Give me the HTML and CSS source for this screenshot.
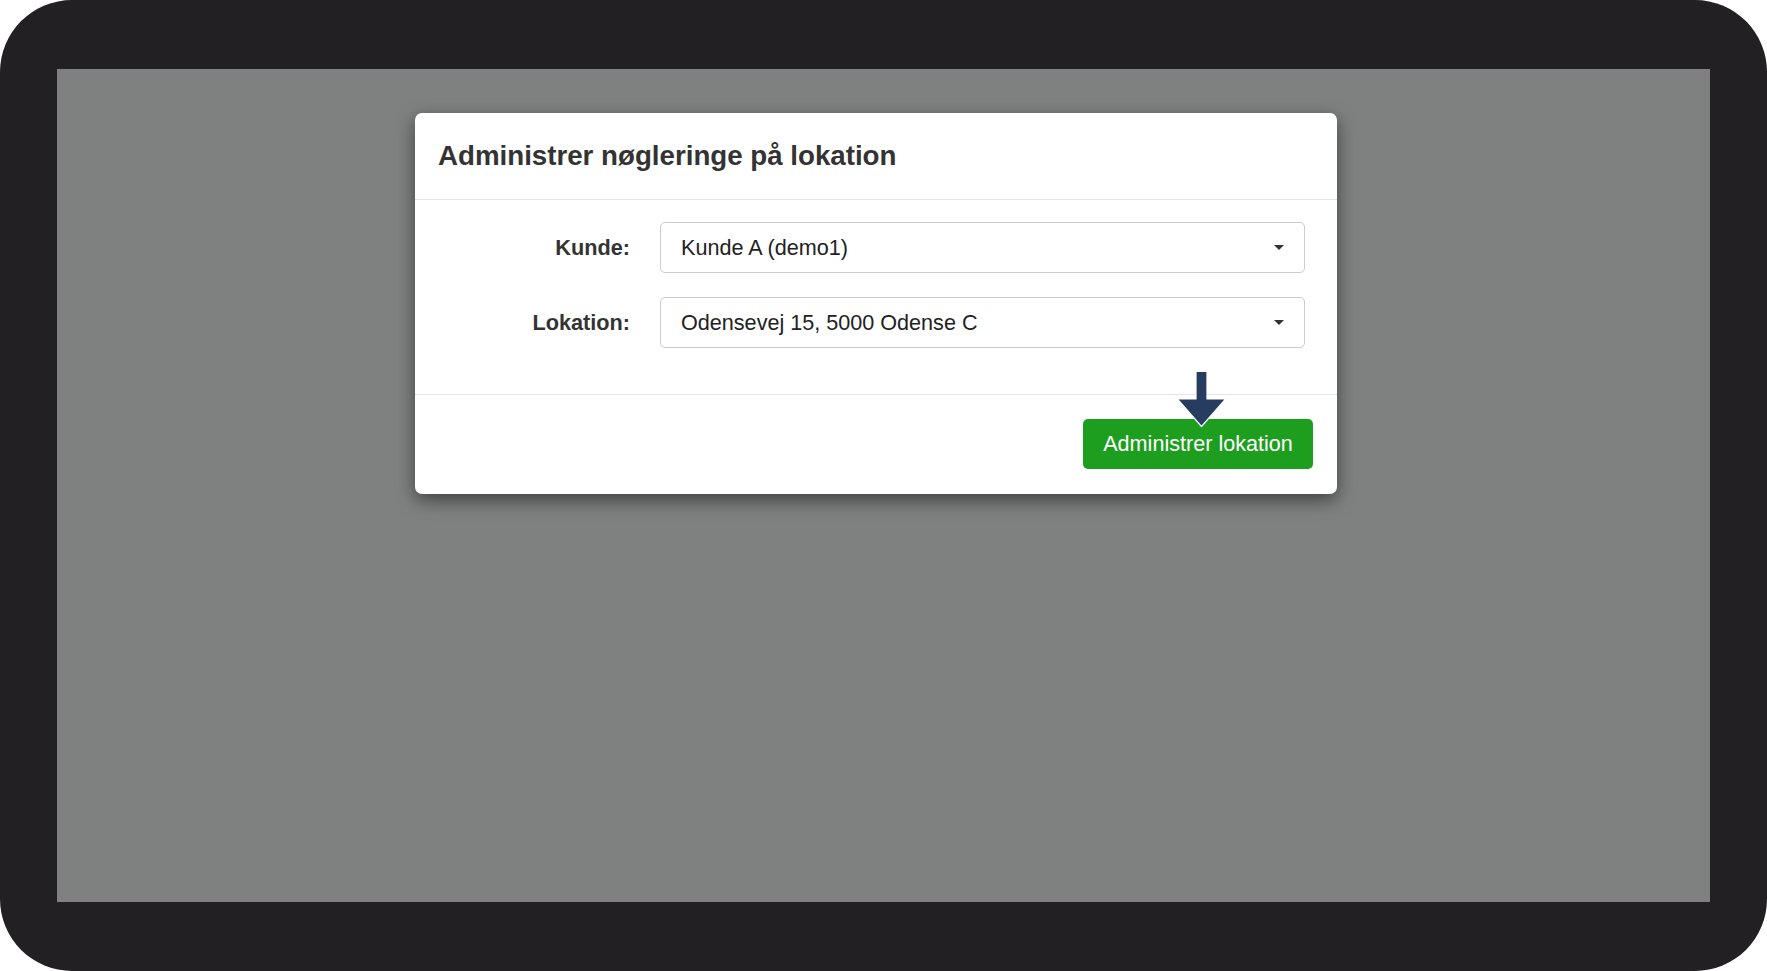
FILE: index.html
```html
<!DOCTYPE html>
<html lang="da">
<head>
    <meta charset="UTF-8">
    <meta name="viewport" content="width=device-width, initial-scale=1.0">
    <title>Administrer nøgleringe</title>
    <link rel="stylesheet" href="styles.css">
</head>
<body>
    <div class="frame">
        <div class="screen">
            <div class="modal">
                <div class="modal-header">
                    <h4 class="modal-title">Administrer nøgleringe på lokation</h4>
                </div>

                <div class="modal-body">
                    <label class="form-label">Kunde:</label>
                    <div class="select">
                        <span>Kunde A (demo1)</span>
                        <span class="caret"></span>
                    </div>

                    <label class="form-label">Lokation:</label>
                    <div class="select">
                        <span>Odensevej 15, 5000 Odense C</span>
                        <span class="caret"></span>
                    </div>
                </div>

                <div class="modal-footer">
                    <button class="btn-success">Administrer lokation</button>
                </div>

                <!-- pil der peger ned på knappen -->
                <svg class="pointer" width="49" height="57" viewBox="0 0 49 57">
                    <path d="M19 1.5 Q19 0.5 20 0.5 H29 Q30 0.5 30 1.5 V28 H47 Q48.5 28 47.5 29.2 L24.5 55.5 L1.5 29.2 Q0.5 28 2 28 H19 Z"
                          fill="#263d5f" stroke="#ffffff" stroke-width="1.2" stroke-linejoin="round"/>
                </svg>
            </div>
        </div>
    </div>
</body>
</html>
```

FILE: styles.css
```css
body {
    margin: 0;
    background-color: #ffffff;
    font-family: "Liberation Sans", Arial, sans-serif;
}

.frame {
    width: 1767px;
    height: 971px;
    box-sizing: border-box;
    padding: 69px 57px;
    background-color: #222022;
    border-radius: 72px;
}

.screen {
    height: 100%;
    background-color: #7f8080;
    display: flex;
    flex-direction: column;
    align-items: flex-start;
}

.modal {
    position: relative;
    width: 922px;
    margin-top: 44px;
    margin-left: 358px;
    background-color: #ffffff;
    border-radius: 7px;
    box-shadow: 0 6px 18px rgba(0, 0, 0, 0.5);
}

.modal-header {
    height: 87px;
    padding: 0 23px 1px 23px;
    box-sizing: border-box;
    display: flex;
    align-items: center;
    border-bottom: 1px solid #e5e5e5;
}

.modal-title {
    margin: 0;
    font-size: 27.7px;
    font-weight: bold;
    color: #333333;
}

.modal-body {
    display: grid;
    grid-template-columns: 193px 1fr;
    column-gap: 30px;
    row-gap: 24px;
    align-items: center;
    padding: 22px 32px 46px 22px;
}

.form-label {
    text-align: right;
    font-size: 21.7px;
    font-weight: bold;
    color: #333333;
}

.select {
    height: 51px;
    box-sizing: border-box;
    border: 1px solid #cccccc;
    border-radius: 5px;
    padding: 0 20px 0 20px;
    display: flex;
    align-items: center;
    justify-content: space-between;
    font-size: 21.6px;
    color: #222222;
}

.caret {
    width: 0;
    height: 0;
    border-left: 5px solid transparent;
    border-right: 5px solid transparent;
    border-top: 5px solid #333333;
}

.modal-footer {
    display: flex;
    justify-content: flex-end;
    padding: 24px 24px 25px 24px;
    border-top: 1px solid #e5e5e5;
}

.btn-success {
    height: 50px;
    width: 230px;
    border: none;
    border-radius: 5px;
    background-color: #1e9e1f;
    color: #ffffff;
    font-family: "Liberation Sans", Arial, sans-serif;
    font-size: 21.6px;
}

.pointer {
    position: absolute;
    left: 762px;
    top: 258px;
}
```
